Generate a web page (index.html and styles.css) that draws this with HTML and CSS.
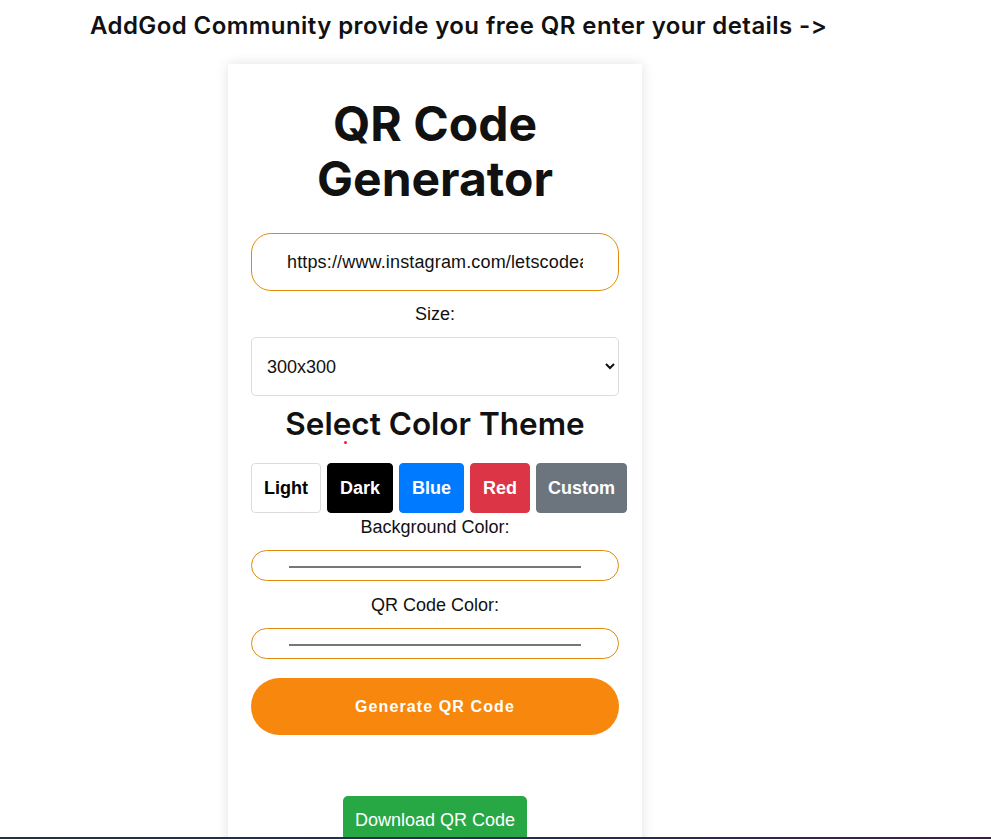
FILE: index.html
```html
<!DOCTYPE html>
<html lang="en">
<head>
<meta charset="utf-8">
<title>QR Code Generator</title>
<link rel="stylesheet" href="styles.css">
</head>
<body>
<div class="page">
  <h2 class="intro">AddGod Community provide you free QR enter your details -&gt;</h2>
  <div class="card">
    <h1 class="title">QR Code<br>Generator</h1>
    <input class="url-input" type="text" value="https://www.instagram.com/letscodeai">
    <label class="field-label">Size:</label>
    <select class="size-select">
      <option>300x300</option>
    </select>
    <h2 class="theme-title">Select Color Theme<span class="dot"></span></h2>
    <div class="themes">
      <button class="theme theme-light">Light</button>
      <button class="theme theme-dark">Dark</button>
      <button class="theme theme-blue">Blue</button>
      <button class="theme theme-red">Red</button>
      <button class="theme theme-custom">Custom</button>
    </div>
    <label class="field-label label-bg">Background Color:</label>
    <div class="color-input"><span class="swatch"></span></div>
    <label class="field-label label-qr">QR Code Color:</label>
    <div class="color-input"><span class="swatch"></span></div>
    <button class="generate">Generate QR Code</button>
    <button class="download">Download QR Code</button>
  </div>
</div>
<footer class="footer"></footer>
</body>
</html>
```

FILE: styles.css
```css
html, body {
  margin: 0;
  padding: 0;
  background: #ffffff;
}

body {
  font-family: "Liberation Sans", Arial, sans-serif;
  color: #111;
  overflow: hidden;
}

.page {
  height: 837px;
  display: flex;
  flex-direction: column;
  align-items: flex-start;
}

.intro {
  margin: 0;
  padding: 11px 0 0 90px;
  font-family: Inter, "Open Sans", sans-serif;
  font-weight: 600;
  font-size: 24px;
  line-height: 30px;
  letter-spacing: 0.42px;
  font-variant-ligatures: none;
  font-feature-settings: "calt" 0, "liga" 0;
  color: #111;
}

.card {
  margin: 23px 0 0 228px;
  width: 414px;
  box-sizing: border-box;
  padding: 0 23px 30px;
  background: #fff;
  box-shadow: 0 0 12px rgba(0, 0, 0, 0.12);
  display: flex;
  flex-direction: column;
  align-items: stretch;
}

.title {
  margin: 32px 0 0;
  font-family: Inter, "Open Sans", sans-serif;
  font-weight: 700;
  font-size: 48px;
  line-height: 55px;
  text-align: center;
  color: #111;
}

.url-input {
  margin-top: 27px;
  height: 58px;
  box-sizing: border-box;
  border: 1px solid #e08c0a;
  border-radius: 20px;
  padding: 0 35px;
  font-family: "Liberation Sans", Arial, sans-serif;
  font-size: 18px;
  letter-spacing: 0.15px;
  color: #111;
  background: #fff;
  outline: none;
}

.field-label {
  display: block;
  text-align: center;
  font-size: 18px;
  line-height: 21px;
  color: #111;
  margin: 13px 0 12px;
}

.size-select {
  height: 59px;
  box-sizing: border-box;
  border: 1px solid #dcdcdc;
  border-radius: 5px;
  background: #fff;
  padding: 0 10px 0 11px;
  font-family: "Liberation Sans", Arial, sans-serif;
  font-size: 18px;
  color: #111;
}

.theme-title {
  position: relative;
  margin: 10px 0 0;
  font-family: Inter, "Open Sans", sans-serif;
  font-weight: 600;
  font-size: 31.5px;
  line-height: 36px;
  text-align: center;
  color: #111;
}

.dot {
  position: absolute;
  left: 93px;
  top: 35px;
  width: 3px;
  height: 3px;
  border-radius: 50%;
  background: #e8202a;
}

.themes {
  margin-top: 21px;
  display: flex;
  gap: 6px;
  width: 380px;
}

.theme {
  height: 50px;
  padding: 0 12px;
  border: 1px solid #dcdcdc;
  border-radius: 4px;
  font-family: "Liberation Sans", Arial, sans-serif;
  font-weight: 700;
  font-size: 18px;
  color: #fff;
  flex: none;
}

.theme-light { background: #fff; color: #000; }
.theme-dark { background: #000; border-color: #000; }
.theme-blue { background: #007bff; border-color: #007bff; }
.theme-red { background: #dc3545; border-color: #dc3545; }
.theme-custom { background: #6c757d; border-color: #6c757d; padding: 0 11px; }

.label-bg { margin: 4px 0 12px; }
.label-qr { margin: 14px 0 12px; }

.color-input {
  height: 31px;
  box-sizing: border-box;
  border: 1px solid #e08c0a;
  border-radius: 16px;
  display: flex;
  align-items: center;
  padding: 0 37px;
}

.swatch {
  flex: 1;
  height: 2px;
  background: #777;
  margin-top: 2px;
}

.generate {
  margin-top: 19px;
  height: 57px;
  border: none;
  border-radius: 29px;
  background: #f8870e;
  color: #fff;
  font-family: "Liberation Sans", Arial, sans-serif;
  font-weight: 700;
  font-size: 16px;
  letter-spacing: 1.1px;
  padding-top: 2px;
}

.download {
  align-self: center;
  margin-top: 61px;
  padding: 14px 12px 10px;
  border: none;
  border-radius: 5px;
  background: #28a745;
  color: #fff;
  font-family: "Liberation Sans", Arial, sans-serif;
  font-size: 18px;
  line-height: 21px;
}

.footer {
  position: relative;
  z-index: 1;
  height: 40px;
  background: linear-gradient(90deg, #22333a 0%, #25295a 50%, #3a1f44 100%);
}
```
